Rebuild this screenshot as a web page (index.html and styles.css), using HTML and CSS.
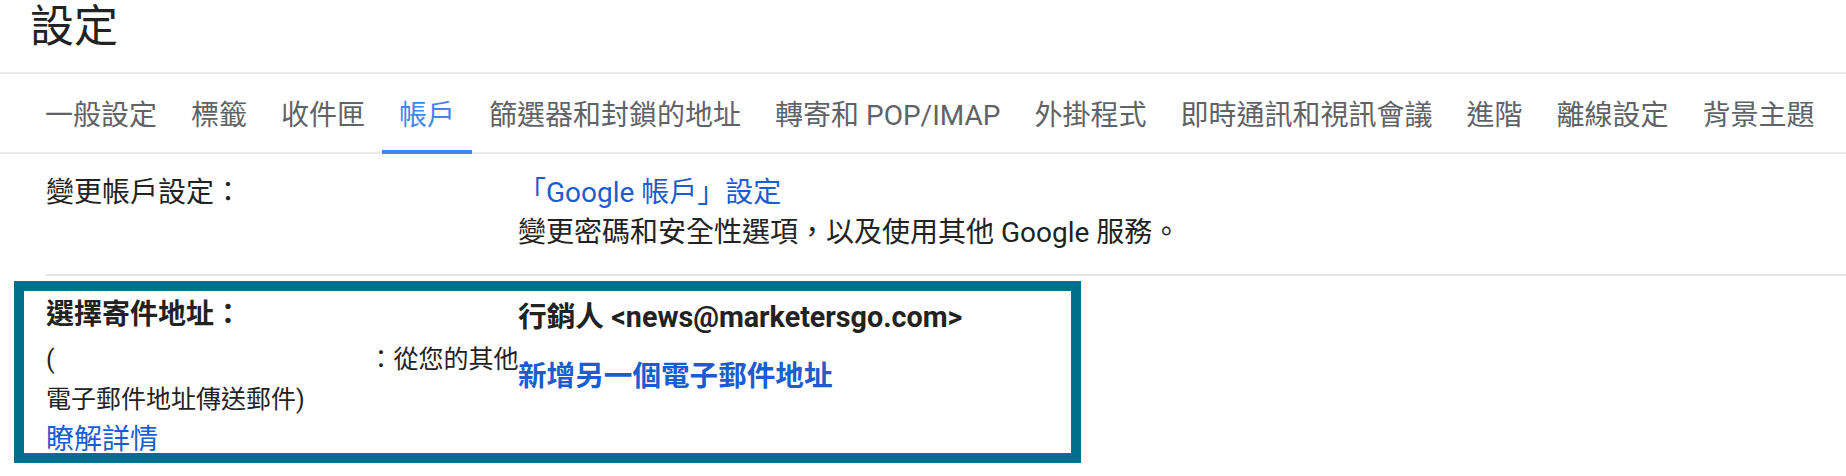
FILE: index.html
```html
<!DOCTYPE html>
<html lang="zh-Hant">
<head>
  <meta charset="UTF-8">
  <title>設定</title>
  <link rel="stylesheet" href="styles.css">
</head>
<body>

  <div class="header">
    <h1>設定</h1>
  </div>

  <div class="tabs">
    <a class="tab">一般設定</a>
    <a class="tab">標籤</a>
    <a class="tab">收件匣</a>
    <a class="tab active">帳戶</a>
    <a class="tab">篩選器和封鎖的地址</a>
    <a class="tab">轉寄和 POP/IMAP</a>
    <a class="tab">外掛程式</a>
    <a class="tab">即時通訊和視訊會議</a>
    <a class="tab">進階</a>
    <a class="tab">離線設定</a>
    <a class="tab">背景主題</a>
  </div>

  <div class="settings">
    <div class="row first">
      <div class="label">變更帳戶設定：</div>
      <div class="value">
        <a class="link">「Google 帳戶」設定</a>
        <div>變更密碼和安全性選項，以及使用其他 Google 服務。</div>
      </div>
    </div>

    <!-- 寄件地址 (框起來的部分) -->
    <div class="row highlight">
      <div class="label">
        <div class="label-title">選擇寄件地址：</div>
        <div class="note">(<span class="gap"></span>：從您的其他<br>電子郵件地址傳送郵件)</div>
        <a class="link more">瞭解詳情</a>
      </div>
      <div class="value">
        <div class="sender">行銷人 &lt;news@marketersgo.com&gt;</div>
        <a class="link add">新增另一個電子郵件地址</a>
      </div>
    </div>
  </div>

</body>
</html>
```

FILE: styles.css
```css
body {
  margin: 0;
  font-family: Roboto, "Noto Sans CJK TC", sans-serif;
  color: #222;
  background-color: #fff;
}

.header {
  height: 72px;
  padding-left: 30px;
}

h1 {
  margin: 0;
  font-size: 44px;
  font-weight: normal;
  line-height: 54px;
  color: #222;
}

.tabs {
  display: flex;
  align-items: flex-start;
  height: 78px;
  padding-left: 28px;
  border-top: 2px solid #ececec;
  border-bottom: 2px solid #ececec;
}

.tab {
  display: flex;
  align-items: center;
  flex-shrink: 0;
  box-sizing: border-box;
  height: 80px;
  padding: 2px 17px 0;
  margin-bottom: -2px;
  border-bottom: 4px solid transparent;
  font-size: 28px;
  color: #5f6368;
  white-space: nowrap;
  cursor: pointer;
}

.tab.active {
  color: #4285f4;
  border-bottom-color: #4285f4;
}

.settings {
  margin-left: 46px;
}

.row {
  display: grid;
  grid-template-columns: 472px 1fr;
}

.row.first {
  padding: 19px 0 21px;
  border-bottom: 2px solid #e5e5e5;
  font-size: 28px;
  line-height: 40px;
}

.link {
  color: #1a5dd1;
  text-decoration: none;
  cursor: pointer;
}

.highlight {
  box-sizing: border-box;
  width: 1067px;
  height: 182px;
  margin: 5px 0 0 -32px;
  padding: 4px 0 0 22px;
  border: 10px solid #006f8e;
  overflow: hidden;
}

.label-title {
  font-size: 28px;
  font-weight: bold;
  line-height: 40px;
}

.note {
  margin-top: 5px;
  font-size: 25px;
  line-height: 40px;
  white-space: nowrap;
}

.gap {
  display: inline-block;
  width: 314px;
}

.more {
  display: block;
  font-size: 28px;
  line-height: 40px;
}

.sender {
  margin-top: 2px;
  font-size: 28.7px;
  font-weight: bold;
  line-height: 40px;
}

.add {
  display: block;
  margin-top: 19px;
  font-size: 28.6px;
  font-weight: bold;
  line-height: 40px;
}
```
